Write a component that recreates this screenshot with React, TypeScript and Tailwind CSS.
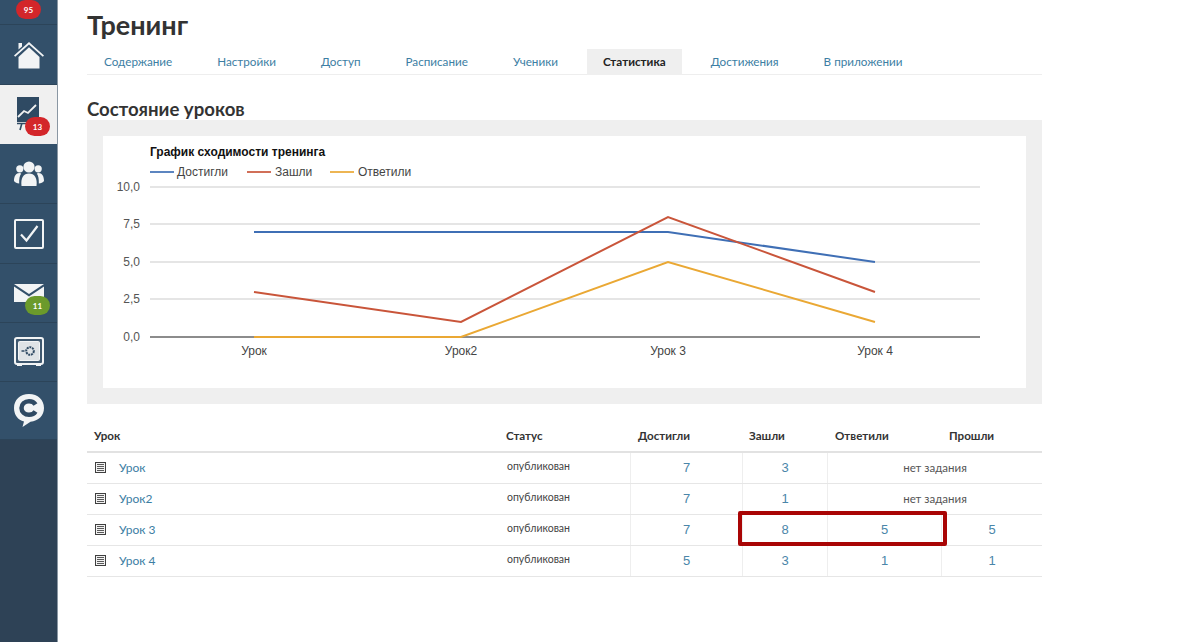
import React from "react";

const sans = "font-['Lato','Open_Sans',sans-serif]";

function Badge({ n, green, className }: { n: string; green?: boolean; className: string }) {
  return (
    <span className={`absolute flex items-center justify-center rounded-full text-white font-bold text-[8px] leading-none w-[25px] h-[19px] ${green ? "bg-[#6b9a2b]" : "bg-[#d3262a]"} ${className}`}>
      {n}
    </span>
  );
}

const Home = () => (
  <svg width="30" height="28" viewBox="0 0 30 28" fill="#f2f4f5">
    <path d="M0 14.5 15 1l15 13.5-1.2 1.3L15 3.6 1.2 15.8z" />
    <path d="M4.5 2h3.5v3.6L4.5 8.6z" />
    <path d="M4.5 16 15 6.2 25.5 16v11.5h-21z" />
  </svg>
);
const Board = () => (
  <svg width="24" height="34" viewBox="0 0 24 34">
    <rect x="1" y="0" width="22" height="25" fill="#2f4a63" />
    <path d="M2 20l6-6 4 2 8-8" fill="none" stroke="#f0f1f1" strokeWidth="1.8" />
    <path d="M1 26.500h14M6 26l-2 7" stroke="#2f4a63" strokeWidth="1.6" />
  </svg>
);
const Team = () => (
  <svg width="30" height="26" viewBox="0 0 30 26" fill="#f2f4f5">
    <circle cx="15" cy="6" r="5.6" />
    <circle cx="5.8" cy="7.8" r="3.6" />
    <circle cx="24.2" cy="7.8" r="3.6" />
    <path d="M7.5 25c-1-8 2-12.500 7.500-12.500S23.500 17 22.500 25z" />
    <path d="M0 20c0-5 2-8 5.500-8 .8 0 1.200.2 1.700.5C5.500 15 5 18 5.200 22.500 3 22.200 1 21.500 0 20z" />
    <path d="M30 20c0-5-2-8-5.500-8-.8 0-1.200.2-1.700.5 1.700 2.500 2.200 5.500 2 10 2.200-.3 4.200-1 5.200-2.500z" />
  </svg>
);
const Check = () => (
  <svg width="30" height="30" viewBox="0 0 30 30" fill="none">
    <rect x="1" y="1" width="28" height="28" rx="1" stroke="#f2f4f5" strokeWidth="2" />
    <path d="M7 15.500l5.500 6L23.500 7" stroke="#f2f4f5" strokeWidth="2.200" />
  </svg>
);
const Mail = () => (
  <svg width="30" height="18" viewBox="0 0 30 18" fill="#f2f4f5">
    <path d="M0 0h30L15 10z" />
    <path d="M0 2.500 15 12.500 30 2.500V18H0z" />
  </svg>
);
const Safe = () => (
  <svg width="30" height="30" viewBox="0 0 30 30" fill="none">
    <rect x="1" y="1" width="28" height="26" rx="2" fill="#3f586f" stroke="#f2f4f5" strokeWidth="2" />
    <rect x="4.500" y="4.500" width="21" height="19" rx="1" fill="#dfe3e6" stroke="#f2f4f5" strokeWidth="1" />
    <circle cx="16" cy="14" r="3.800" stroke="#2f4a63" strokeWidth="2" strokeDasharray="2 0.800" />
    <path d="M7.500 14h3" stroke="#2f4a63" strokeWidth="1.500" />
    <path d="M3 27v2h5v-2M22 27v2h5v-2" fill="#f2f4f5" />
  </svg>
);
const Chat = () => (
  <svg width="30" height="33" viewBox="0 0 30 33">
    <path d="M15 0C6 0 0 6 0 14c0 7 4 12 10 13.500L8.500 33l8-5.200C24.500 27 30 21.500 30 14 30 6 24 0 15 0z" fill="#f2f4f5" />
    <path d="M21.500 10.500C20.300 8.500 18 7.200 15 7.200c-4.300 0-7.500 3-7.500 6.800s3.200 6.800 7.500 6.800c3 0 5.300-1.300 6.500-3.300" fill="none" stroke="#2f4a63" strokeWidth="4.500" />
  </svg>
);

function NavItem({ active, h, children }: { active?: boolean; h: string; children: React.ReactNode }) {
  return (
    <div className={`relative flex items-center justify-center border-b ${h} ${active ? "bg-[#f0f0f0] border-[#f0f0f0]" : "border-[#2c4459]"}`}>
      {children}
    </div>
  );
}

function Sidebar() {
  return (
    <aside className="w-[58px] shrink-0 h-[642px] bg-[#33506a] border-r border-[#8a97a3] flex flex-col overflow-hidden">
      <div className="relative h-[25px] shrink-0 border-b border-[#2c4459]">
        <Badge n="95" className="left-[16px] top-[0px]" />
      </div>
      <NavItem h="h-[60px]"><Home /></NavItem>
      <NavItem active h="h-[59px]">
        <span className="-ml-[2px]"><Board /></span>
        <Badge n="13" className="left-[25px] top-[32px]" />
      </NavItem>
      <NavItem h="h-[60px]"><Team /></NavItem>
      <NavItem h="h-[60px]"><Check /></NavItem>
      <NavItem h="h-[59px]">
        <Mail />
        <Badge n="11" green className="left-[25px] top-[32px]" />
      </NavItem>
      <NavItem h="h-[59px]"><Safe /></NavItem>
      <NavItem h="h-[58px]"><Chat /></NavItem>
      <div className="flex-1 bg-[#2e4256]" />
    </aside>
  );
}

const tabs = ["Содержание", "Настройки", "Доступ", "Расписание", "Ученики", "Статистика", "Достижения", "В приложении"];

function Tabs() {
  return (
    <div className="flex gap-[13px] h-[26px] pl-[1px] border-b border-[#eeeeee] w-[955px]">
      {tabs.map((t) => {
        const on = t === "Статистика";
        return (
          <div key={t} className={`px-[16px] h-[26px] flex items-center justify-center text-[11.700px] whitespace-nowrap ${on ? "bg-[#efefef] font-bold text-[#222222]" : "text-[#3c7ea3]"}`}>
            {t}
          </div>
        );
      })}
    </div>
  );
}

function Chart() {
  const ys = [
    [187, "10,0"],
    [224, "7,5"],
    [262, "5,0"],
    [299, "2,5"],
  ] as [number, string][];
  const off = { x: 103, y: 136 };
  const xs = [254, 461, 668, 875].map((x) => x - off.x);
  const Y = (v: number) => 337 - off.y - v * 15;
  const line = (vals: number[]) => vals.map((v, i) => `${xs[i]},${Y(v)}`).join(" ");
  const F = "'Liberation Sans', Arial, sans-serif";
  return (
    <svg width="923" height="252" viewBox="0 0 923 252" className="block">
      <text x="47" y="20" fontFamily={F} fontSize="12" fontWeight="700" fill="#111111">График сходимости тренинга</text>
      {[
        [47, 74, "#3f6fb5", "Достигли"],
        [144, 172, "#c9553a", "Зашли"],
        [227, 255, "#eaa834", "Ответили"],
      ].map(([x, tx, c, t]) => (
        <g key={t as string}>
          <line x1={x as number} x2={(x as number) + 24} y1="36" y2="36" stroke={c as string} strokeWidth="1.700" />
          <text x={tx as number} y="40" fontFamily={F} fontSize="12" fill="#444444">{t as string}</text>
        </g>
      ))}
      {ys.map(([y, t]) => (
        <g key={t}>
          <line x1="47" x2="877" y1={y - off.y} y2={y - off.y} stroke="#dcdcdc" strokeWidth="1.300" />
          <text x="37" y={y - off.y + 4} textAnchor="end" fontFamily={F} fontSize="12" fill="#555555">{t}</text>
        </g>
      ))}
      <line x1="47" x2="877" y1="201" y2="201" stroke="#666666" strokeWidth="1.300" />
      <text x="37" y="205" textAnchor="end" fontFamily={F} fontSize="12" fill="#555555">0,0</text>
      <polyline points={line([7, 7, 7, 5])} fill="none" stroke="#3f6fb5" strokeWidth="2" />
      <polyline points={line([3, 1, 8, 3])} fill="none" stroke="#c9553a" strokeWidth="2" />
      <polyline points={line([0, 0, 5, 1])} fill="none" stroke="#eaa834" strokeWidth="2" />
      {["Урок", "Урок2", "Урок 3", "Урок 4"].map((t, i) => (
        <text key={t} x={xs[i]} y="219" textAnchor="middle" fontFamily={F} fontSize="12" fill="#444444">{t}</text>
      ))}
    </svg>
  );
}

const DocIcon = () => (
  <svg width="11" height="11" viewBox="0 0 11 11" className="block">
    <rect x="0.500" y="0.500" width="10" height="10" fill="#f2f2f2" stroke="#3f3f3f" />
    <path d="M2 2.500h7M2 4.500h7M2 6.500h7M2 8.500h7" stroke="#5a5a5a" strokeWidth="1" />
  </svg>
);

type Row = { name: string; a: string; b: string; c?: string; d?: string };
const rows: Row[] = [
  { name: "Урок", a: "7", b: "3" },
  { name: "Урок2", a: "7", b: "1" },
  { name: "Урок 3", a: "7", b: "8", c: "5", d: "5" },
  { name: "Урок 4", a: "5", b: "3", c: "1", d: "1" },
];

const cols = "grid grid-cols-[419px_124px_112px_85px_114px_101px]";
const num = "flex items-center justify-center border-l border-[#eeeeee] text-[#4a86a9] font-['Liberation_Sans',sans-serif]";

function LessonTable() {
  return (
    <div className="w-[955px] relative text-[#333333]">
      <div className={`${cols} h-[33px] items-center border-b-2 border-[#e2e2e2] text-[11.600px] font-bold`}>
        <div className="pl-[7px]">Урок</div>
        <div>Статус</div>
        <div className="pl-[8px]">Достигли</div>
        <div className="pl-[7px]">Зашли</div>
        <div className="pl-[8px]">Ответили</div>
        <div className="pl-[8px]">Прошли</div>
      </div>
      {rows.map((r) => (
        <div key={r.name} className={`${cols} h-[31px] border-b border-[#e6e6e6] text-[13px]`}>
          <div className="flex items-center">
            <span className="ml-[8px] w-[24px] -mt-[2px]"><DocIcon /></span>
            <span className="text-[#3c7ea3] text-[12px]">{r.name}</span>
          </div>
          <div className="flex items-center pl-[1px] text-[10.500px] text-[#444444] -mt-[2px]">опубликован</div>
          <div className={num}>{r.a}</div>
          <div className={num}>{r.b}</div>
          {r.c ? (
            <>
              <div className={num}>{r.c}</div>
              <div className={num}>{r.d}</div>
            </>
          ) : (
            <div className="col-span-2 flex items-center justify-center border-l border-[#eeeeee] text-[11.500px] text-[#555555]">нет задания</div>
          )}
        </div>
      ))}
      <div className="absolute left-[651px] top-[91px] w-[209px] h-[35px] border-[4px] border-[#a90505] rounded-[2px]" />
    </div>
  );
}

export default function App() {
  return (
    <div className={`flex w-[1200px] h-[642px] bg-white overflow-hidden ${sans}`}>
      <Sidebar />
      <main className="pl-[29px] pt-[10px]">
        <h1 className="text-[27px] leading-[30px] font-bold text-[#333333] h-[39px]">Тренинг</h1>
        <Tabs />
        <h2 className="mt-[24px] text-[18.600px] leading-[20px] font-bold text-[#333333]">Состояние уроков</h2>
        <div className="w-[955px] h-[284px] mt-[1px] bg-[#efefef] p-[16px]">
          <div className="bg-white h-[252px]">
            <Chart />
          </div>
        </div>
        <div className="mt-[16px]">
          <LessonTable />
        </div>
      </main>
    </div>
  );
}
